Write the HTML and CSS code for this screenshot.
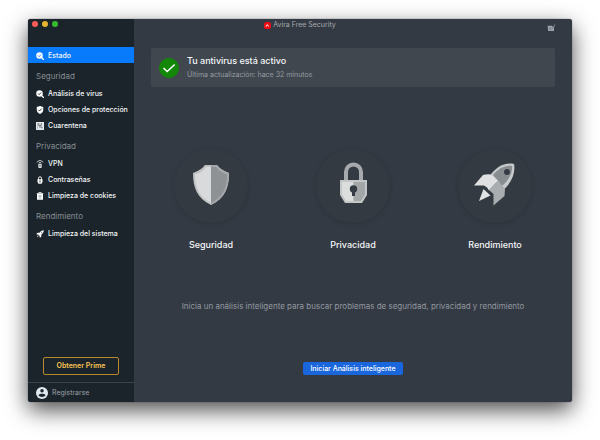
FILE: index.html
```html
<!DOCTYPE html>
<html lang="es">
<head>
<meta charset="utf-8">
<title>Avira Free Security</title>
<link rel="stylesheet" href="styles.css">
</head>
<body>
<svg class="defs" aria-hidden="true">
  <symbol id="scan" viewBox="0 0 16 16">
    <circle cx="7" cy="7" r="6.5" fill="#fff"/>
    <path d="M11 11l4 4" stroke="#fff" stroke-width="2.6" stroke-linecap="round"/>
    <path d="M4 7l2.3 2.3L10.2 5" fill="none" stroke="var(--cut)" stroke-width="1.6"/>
  </symbol>
</svg>
<div class="window">
  <aside class="sidebar">
    <nav class="nav">
      <a class="item active" href="#"><svg class="icon"><use href="#scan"/></svg>Estado</a>
      <h2 class="heading">Seguridad</h2>
      <a class="item" href="#"><svg class="icon"><use href="#scan"/></svg>Análisis de virus</a>
      <a class="item" href="#"><svg class="icon" viewBox="0 0 16 16"><path d="M8 0l6.500 2v5.500c0 4-2.500 6.800-6.500 8.500-4-1.700-6.500-4.500-6.500-8.500V2z" fill="#fff"/><path d="M4.500 7.500L7 10l4.500-5" fill="none" stroke="#1b242b" stroke-width="1.700"/></svg>Opciones de protección</a>
      <a class="item" href="#"><svg class="icon" viewBox="0 0 16 16"><path d="M0 0h16v16H0z" fill="#e6e9eb"/><path d="M5.500 2v5h5V2M12 13v-3H6" fill="none" stroke="#48535a" stroke-width="1.500"/><path d="M3 2v12" stroke="#8b959a"/></svg>Cuarentena</a>
      <h2 class="heading">Privacidad</h2>
      <a class="item" href="#"><svg class="icon" viewBox="0 0 16 16" fill="none" stroke="#dfe3e5" stroke-width="1.700"><path d="M2 5a6.500 6.500 0 0 1 12 0M5 6.500a3.500 3.500 0 0 1 6 0"/><rect x="4.500" y="7.500" width="7" height="8.500" rx="2" fill="#dfe3e5" stroke="none"/><path d="M8 10v3" stroke="#1b242b"/></svg>VPN</a>
      <a class="item" href="#"><svg class="icon" viewBox="0 0 16 16"><path d="M5 8V4.500a3 3 0 0 1 6 0V8" fill="none" stroke="#fff" stroke-width="1.800"/><path d="M3 6.500h10V12l-2 3.500H5L3 12z" fill="#fff"/><path d="M8 9v4" stroke="#1b242b" stroke-width="2"/></svg>Contraseñas</a>
      <a class="item" href="#"><svg class="icon" viewBox="0 0 16 16"><path d="M2 4h12v11.500H2zM1.500 2H5V.5h6V2h3.500v1.500h-13z" fill="#fff"/><path d="M5 7h6M5 9.500h6M5 12h6" stroke="#77828a"/></svg>Limpieza de cookies</a>
      <h2 class="heading">Rendimiento</h2>
      <a class="item" href="#"><svg class="icon" viewBox="0 0 16 16" fill="#fff"><path d="M15.500.5c-4 .3-6.500 2.200-8.300 5L3 5.300.5 8.500l4.500.8 2 2 .8 4.200 3-2.500-.1-4C13.500 7.200 15.400 4.500 15.500.5zM4 10.500L1.500 14.500l4-2.500z"/><circle cx="11.500" cy="4.500" r="1" fill="#1b242b"/></svg>Limpieza del sistema</a>
    </nav>
    <button class="prime" type="button">Obtener Prime</button>
    <a class="account" href="#"><svg class="avatar" viewBox="0 0 24 24"><circle cx="12" cy="12" r="12" fill="#e1e8ee"/><circle cx="12" cy="7.500" r="3.500" fill="#1b242b"/><path d="M5 16.500c1-4 13-4 14 0-2.500 4.500-11.500 4.500-14 0z" fill="#1b242b"/></svg>Registrarse</a>
  </aside>
  <header class="titlebar">
    <div class="lights"><i class="light red"></i><i class="light yellow"></i><i class="light green"></i></div>
    <h1 class="title"><svg class="logo" viewBox="0 0 16 16"><rect width="16" height="16" rx="6" fill="#ee0b13"/><path d="M3.500 11c1-4 2.500-5.500 5-6l3.500 6h-2L8 8c-1.500.5-2 1.500-2.300 3z" fill="#ffd9d9"/></svg>Avira Free Security</h1>
    <svg class="tune" viewBox="0 0 16 16"><path d="M1 5h8l1.500 2L15 1l-2.500 7v6H2z" fill="#9aa3aa"/><path d="M5 7.500v4M5 11h3M13.500 4L9 10.500" stroke="#5b656c" fill="none"/></svg>
  </header>
  <main class="main">
    <section class="status">
      <svg class="check" viewBox="0 0 20 20"><circle cx="10" cy="10" r="10" fill="#138808"/><path d="M4.500 10l3.700 3.500 7.500-7" fill="none" stroke="#fff" stroke-width="1.500"/></svg>
      <div>
        <h2 class="status-title">Tu antivirus está activo</h2>
        <p class="status-note">Última actualización: hace 32 minutos</p>
      </div>
    </section>
    <section class="modules">
      <a class="module" href="#">
        <span class="disc"><svg class="art" viewBox="0 1 48 48"><path d="M24 4h6c3 4 7 6 12 8 0 15-4 25-18 32C10 37 6 27 6 12c5-2 9-4 12-8z" fill="#bfc1c2"/><path d="M24 6h-5c-3 4-6 6-11 7.500C8 27 12 36 24 42z" fill="#d9dadb"/><path d="M24 4h6c3 4 7 6 12 8 0 15-4 25-18 32z" fill="#a5a8aa"/><path d="M24 6h5c3 4 6 6 11 7.500C40 27 36 36 24 42z" fill="#8e9294"/></svg></span>
        Seguridad
      </a>
      <a class="module" href="#">
        <span class="disc"><svg class="art" viewBox="0 2 48 48"><path d="M17 23V12a7.500 7.500 0 0 1 15 0v11" fill="none" stroke="#a6aaad" stroke-width="4"/><path d="M11 20h27v15l-5 8H16l-5-8z" fill="#c4c7c8"/><path d="M13 22h11.500v19H17l-4-7z" fill="#dcdddd"/><path d="M24.500 22H36v12l-4 7h-7.500z" fill="#a3a7a8"/><circle cx="24.500" cy="29" r="3.700" fill="#343b43"/><path d="M23 30h3v6h-3z" fill="#343b43"/></svg></span>
        Privacidad
      </a>
      <a class="module" href="#">
        <span class="disc"><svg class="art" viewBox="1 2 48 48"><path d="M20 16C25 8 34 2 44 4c2 9-3 20-12 27z" fill="#c7cacc"/><path d="M23 15c5-6 12-10 19-9C43 13 38 21 32 26z" fill="#888d90"/><circle cx="37" cy="12" r="3" fill="#343b43"/><path d="M4 25.500L13 15q4-1 8-.500l7 6-9 10-2-3-3-2z" fill="#dfe0e1"/><path d="M28 20.500l7 8.500-.500 7-11 9.500V34l-4.500-4z" fill="#a9adaf"/><path d="M13.500 29l7 6.500L9 41z" fill="#e2e3e4"/></svg></span>
        Rendimiento
      </a>
    </section>
    <p class="prompt">Inicia un análisis inteligente para buscar problemas de seguridad, privacidad y rendimiento</p>
    <button class="start" type="button">Iniciar Análisis inteligente</button>
  </main>
</div>
</body>
</html>
```
FILE: styles.css
```css
* { box-sizing: border-box; }

body {
  margin: 0;
  padding: 19px 28px 38px;
  background: #fff;
  font: 7px/10px Inter, "Liberation Sans", sans-serif;
  color: #f4f6f8;
}

h1, h2, p { margin: 0; font-weight: 400; }
a { color: inherit; text-decoration: none; }
button { font: inherit; padding: 0; cursor: pointer; }
svg { flex: none; }
.defs { position: absolute; width: 0; height: 0; }

.window {
  display: grid;
  grid-template: 28px 1fr / 106px 1fr;
  min-height: calc(100vh - 57px);
  border-radius: 3px;
  overflow: hidden;
  background: #343a43;
  box-shadow: 0 0 1px #222, 0 8px 22px rgba(0, 0, 0, .7);
}

.titlebar {
  grid-area: 1 / 1 / 2 / 3;
  display: grid;
  grid-template-columns: 1fr auto 1fr;
  align-items: start;
  padding: 2px 16px 0 4px;
}
.lights { display: flex; gap: 4px; }
.light { width: 6px; height: 6px; border-radius: 50%; }
.red { background: #fc5b57; }
.yellow { background: #e5b532; }
.green { background: #38b92e; }
.title {
  display: flex;
  align-items: center;
  gap: 2px;
  margin-left: 12px;
  font-size: 7px;
  line-height: 8px;
  color: #a4a9ae;
}
.logo { width: 7px; height: 7px; }
.tune { width: 9px; height: 9px; justify-self: end; margin-top: 2px; }

.sidebar {
  grid-area: 1 / 1 / 3 / 2;
  display: flex;
  flex-direction: column;
  padding-top: 28px;
  background: #1b242b;
}
.nav { flex: 1; }
.item {
  --cut: #1b242b;
  display: flex;
  align-items: center;
  gap: 4px;
  height: 16px;
  padding: 1px 0 0 8px;
  font-weight: 500;
  white-space: nowrap;
}
.active { --cut: #087bfd; background: #087bfd; }
.icon { width: 8px; height: 8px; }
.heading {
  margin: 5px 0 1px;
  padding-left: 8px;
  font-size: 8px;
  line-height: 16px;
  color: #868d92;
}
.prime {
  height: 18px;
  margin: 0 15px 7px;
  border: 1px solid #b9892f;
  border-radius: 2px;
  background: none;
  color: #fac454;
  font-weight: 600;
}
.account {
  display: flex;
  align-items: center;
  gap: 4px;
  height: 20px;
  padding-left: 8px;
  border-top: 1px solid #38434a;
  color: #9ba1a6;
}
.avatar { width: 12px; height: 12px; }

.main {
  grid-area: 2 / 2;
  display: flex;
  flex-direction: column;
  align-items: center;
  padding: 1px 0 27px;
}
.status {
  display: flex;
  align-items: center;
  align-self: stretch;
  gap: 8px;
  height: 39px;
  margin: 0 17px;
  padding-left: 8px;
  border-radius: 2px;
  background: #40474f;
}
.check { width: 20px; height: 20px; }
.status-title { font-size: 9px; line-height: 14px; font-weight: 500; }
.status-note { line-height: 14px; color: #959ba1; }

.modules {
  display: grid;
  grid-template-columns: repeat(3, 1fr);
  align-self: stretch;
  margin: 62px 6px 0;
}
.module {
  display: flex;
  flex-direction: column;
  align-items: center;
  gap: 15px;
  font-size: 9px;
  line-height: 14px;
  font-weight: 500;
}
.disc {
  display: grid;
  place-items: center;
  width: 74px;
  height: 74px;
  border-radius: 50%;
  background: #343a42;
  box-shadow: 0 1px 4px rgba(20, 26, 32, .22);
}
.art { width: 48px; height: 48px; }

.prompt { margin: 48px 0 auto; font-size: 8px; line-height: 12px; color: #9298a0; }
.start {
  width: 100px;
  height: 13px;
  border: 0;
  border-radius: 2px;
  background: #1a66dc;
  color: #fff;
  line-height: 13px;
  font-weight: 500;
}
```
